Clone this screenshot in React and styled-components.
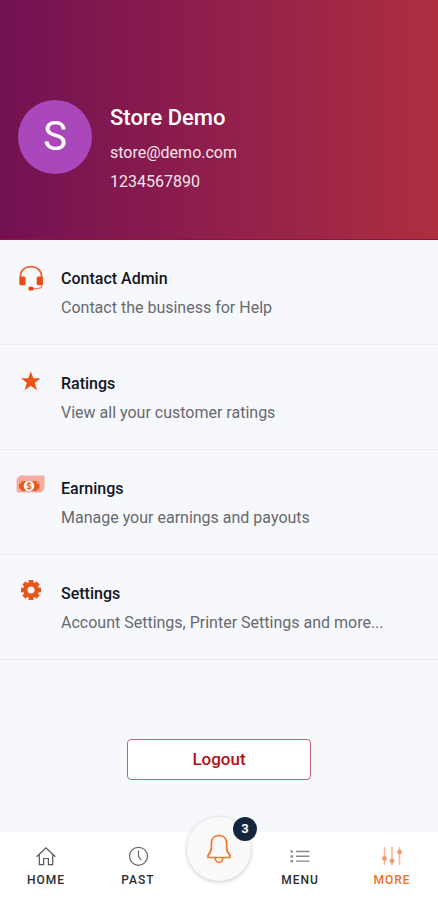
import React from 'react';
import styled, { createGlobalStyle } from 'styled-components';

const GlobalStyle = createGlobalStyle`
  * {
    box-sizing: border-box;
  }
  body {
    margin: 0;
    background: #f7f8fc;
    font-family: Roboto, 'Liberation Sans', sans-serif;
    color: #14151f;
  }
`;

const Page = styled.div`
  display: flex;
  flex-direction: column;
  min-height: 100vh;
`;

const ProfileHeader = styled.header`
  display: flex;
  align-items: flex-start;
  gap: 18px;
  padding: 100px 18px 43px;
  background: linear-gradient(90deg, #721152 0%, #911f4c 50%, #ad2f3f 100%);
  border-bottom: 1px solid #98103c;
`;

const Avatar = styled.div`
  display: flex;
  align-items: center;
  justify-content: center;
  flex-shrink: 0;
  width: 74px;
  height: 74px;
  border-radius: 50%;
  background: #a947bb;
  color: #fff;
  font-size: 40px;
  line-height: 40px;
`;

const ProfileName = styled.h1`
  margin: 0;
  padding: 4px 0 6px;
  font-size: 22px;
  line-height: 28px;
  font-weight: 500;
  color: #fff;
`;

const ProfileText = styled.p`
  margin: 0;
  font-size: 16px;
  line-height: 29px;
  color: #f3e4ea;
`;

const Main = styled.main`
  flex: 1;
`;

const OptionList = styled.ul`
  margin: 0;
  padding: 0;
  list-style: none;
`;

const OptionLink = styled.a`
  display: flex;
  gap: 16px;
  padding: 24px 16px 22px;
  border-bottom: 1px solid #eaebf0;
  color: inherit;
  text-decoration: none;
`;

const OptionIcon = styled.span`
  display: flex;
  flex-shrink: 0;
  width: 29px;
  height: 29px;
  svg {
    width: 29px;
    height: 29px;
  }
`;

const OptionTitle = styled.h2`
  margin: 0;
  font-size: 16px;
  line-height: 29px;
  font-weight: 500;
`;

const OptionText = styled.p`
  margin: 0;
  font-size: 16px;
  line-height: 29px;
  color: #666a70;
`;

const LogoutButton = styled.button`
  display: block;
  width: 42%;
  margin: 79px auto 50px;
  padding: 0;
  background: #fff;
  border: 1px solid #c4627a;
  border-radius: 4px;
  font-family: inherit;
  font-size: 17px;
  line-height: 39px;
  font-weight: 500;
  color: #b01218;
`;

const TabBar = styled.nav`
  position: sticky;
  bottom: 0;
  display: flex;
  height: 68px;
  background: #fff;
`;

const Tab = styled.a`
  display: flex;
  flex: 1;
  flex-direction: column;
  align-items: center;
  gap: 6px;
  padding-top: 14px;
  font-size: 12px;
  line-height: 16px;
  font-weight: 500;
  letter-spacing: 1px;
  text-decoration: none;
  color: ${({ $active }) => ($active ? '#f0701f' : '#2c2c30')};
  svg {
    width: 22px;
    height: 20px;
  }
`;

const AlertSlot = styled.div`
  position: relative;
  width: 70px;
`;

const AlertButton = styled.button`
  position: absolute;
  top: -15px;
  left: 3px;
  display: flex;
  align-items: center;
  justify-content: center;
  width: 64px;
  height: 64px;
  padding: 0;
  border: 0;
  border-radius: 50%;
  background: #fafafa;
  box-shadow: 0 1px 4px rgba(0, 0, 0, 0.22);
  svg {
    width: 26px;
    height: 30px;
  }
`;

const Badge = styled.span`
  position: absolute;
  top: 0;
  right: -6px;
  width: 24px;
  height: 24px;
  border-radius: 50%;
  background: #14263d;
  color: #fff;
  font-family: Roboto, 'Liberation Sans', sans-serif;
  font-size: 13px;
  line-height: 24px;
  font-weight: 700;
  text-align: center;
`;

const HeadsetIcon = () => (
  <svg viewBox="0 0 29 29" fill="none" aria-hidden="true">
    <path
      d="M4.400 14v-1.600C4.400 6.500 9 2.700 15 2.700s10.600 3.800 10.600 9.700V14"
      stroke="#ee5a2a"
      strokeWidth="1.700"
    />
    <path d="M25.800 19v2.600q0 2.600-3 2.800l-7 .4" stroke="#f08a6a" strokeWidth="1.300" />
    <rect x="3.300" y="12.500" width="6.200" height="8.800" rx="1.500" fill="#ee4b14" />
    <rect x="20.700" y="12.500" width="6.200" height="8.800" rx="1.500" fill="#ee4b14" />
    <rect x="12.300" y="22.800" width="5.400" height="3.800" rx="1.700" fill="#ee3f14" />
  </svg>
);

const StarIcon = () => (
  <svg viewBox="0 0 29 29" aria-hidden="true">
    <path
      d="M14.800 2.300l2.500 7h7.300l-5.800 4.500 2.200 7.400-6.200-4.400-6.200 4.400 2.200-7.400L5 9.300h7.300z"
      fill="#ea5418"
    />
  </svg>
);

const MoneyIcon = () => (
  <svg viewBox="0 0 29 29" aria-hidden="true">
    <path
      d="M4.500 1.500h23q1 0 1 1V14q0 .8-.6 1.400l-2.200 2.400q-.6.700-1.600.700H2q-1.400 0-1.400-1.400V5.700q0-.8.600-1.400l1.900-2.100Q3.700 1.500 4.500 1.500z"
      fill="#f4aca2"
    />
    <rect x="3" y="7.200" width="20.500" height="9.800" fill="#ea5a1c" />
    <path
      d="M3 9.700a2.500 2.500 0 0 0 2.500-2.500H3zM3 14.500A2.500 2.500 0 0 1 5.500 17H3zM23.500 9.700A2.500 2.500 0 0 1 21 7.200h2.500zM23.500 14.500A2.500 2.500 0 0 0 21 17h2.500z"
      fill="#f4aca2"
    />
    <circle cx="13" cy="12" r="5.300" fill="#fff" />
    <path
      d="M15 10.200q-.5-1.100-2-1.100t-1.900 1.200c-.2 2.400 4 1.200 3.900 3.300q-.2 1.300-2 1.300t-2.100-1.300M13 8.100v7.800"
      fill="none"
      stroke="#ea6a34"
      strokeWidth="1.200"
    />
  </svg>
);

const GearIcon = () => (
  <svg viewBox="0 0 29 29" aria-hidden="true">
    <g fill="#ea5418" transform="translate(15 11)">
      {[0, 45, 90, 135, 180, 225, 270, 315].map((angle) => (
        <path key={angle} d="M-2.300-6v-4h4.600v4z" transform={`rotate(${angle})`} />
      ))}
      <circle r="7.900" />
      <circle r="3.500" fill="#f7f8fc" />
    </g>
  </svg>
);

const HomeIcon = () => (
  <svg viewBox="0 0 22 20" fill="none" stroke="#55555a" strokeWidth="1.200" aria-hidden="true">
    <path d="M1.700 10.700L11 1.800l9.300 8.900" />
    <path d="M4.300 9v9.700h4.300v-6.200h4.800v6.200h4.300V9" />
  </svg>
);

const ClockIcon = () => (
  <svg viewBox="0 0 22 20" fill="none" stroke="#66666a" strokeWidth="1.200" aria-hidden="true">
    <circle cx="11.500" cy="10.300" r="9" />
    <path d="M11.500 4.500v6l2.800 3.500" />
  </svg>
);

const MenuIcon = () => (
  <svg viewBox="0 0 22 20" stroke="#88888c" strokeWidth="1.400" aria-hidden="true">
    <path d="M1.500 5.500h2.500M1.500 10.300h2.500M1.500 15.100h2.500" strokeWidth="2.200" />
    <path d="M7 5.500h13.500M7 10.300h13.500M7 15.100h13.500" />
  </svg>
);

const SlidersIcon = () => (
  <svg viewBox="0 0 22 20" stroke="#f9b79c" strokeWidth="1.600" fill="#f49a72" aria-hidden="true">
    <path d="M3.500 1v18M11 1v18M18.500 1v18" />
    <g stroke="none">
      <circle cx="3.500" cy="12.500" r="2.400" />
      <circle cx="11" cy="15" r="2.400" />
      <circle cx="18.500" cy="6" r="2.400" />
    </g>
  </svg>
);

const BellIcon = () => (
  <svg viewBox="0 0 26 30" fill="none" stroke="#f0742c" strokeWidth="1.700" strokeLinejoin="round" aria-hidden="true">
    <path d="M13 1.500c-4.600 0-7.600 3.100-7.600 7.700v4.300c0 4-1.200 5.700-3.400 7.800v2.200h22v-2.200c-2.200-2.100-3.400-3.800-3.400-7.800V9.200c0-4.600-3-7.700-7.600-7.700z" />
    <path d="M9.200 23.500a3.800 5 0 0 0 7.600 0" />
  </svg>
);

const options = [
  { title: 'Contact Admin', text: 'Contact the business for Help', icon: <HeadsetIcon /> },
  { title: 'Ratings', text: 'View all your customer ratings', icon: <StarIcon /> },
  { title: 'Earnings', text: 'Manage your earnings and payouts', icon: <MoneyIcon /> },
  {
    title: 'Settings',
    text: 'Account Settings, Printer Settings and more...',
    icon: <GearIcon />,
  },
];

function App() {
  return (
    <Page>
      <GlobalStyle />

      <ProfileHeader>
        <Avatar>S</Avatar>
        <div>
          <ProfileName>Store Demo</ProfileName>
          <ProfileText>store@demo.com</ProfileText>
          <ProfileText>1234567890</ProfileText>
        </div>
      </ProfileHeader>

      <Main>
        <OptionList>
          {options.map(({ title, text, icon }) => (
            <li key={title}>
              <OptionLink href="#">
                <OptionIcon>{icon}</OptionIcon>
                <div>
                  <OptionTitle>{title}</OptionTitle>
                  <OptionText>{text}</OptionText>
                </div>
              </OptionLink>
            </li>
          ))}
        </OptionList>
        <LogoutButton type="button">Logout</LogoutButton>
      </Main>

      <TabBar>
        <Tab href="#">
          <HomeIcon />
          HOME
        </Tab>
        <Tab href="#">
          <ClockIcon />
          PAST
        </Tab>
        <AlertSlot>
          <AlertButton type="button" aria-label="Notifications">
            <BellIcon />
            <Badge>3</Badge>
          </AlertButton>
        </AlertSlot>
        <Tab href="#">
          <MenuIcon />
          MENU
        </Tab>
        <Tab href="#" $active>
          <SlidersIcon />
          MORE
        </Tab>
      </TabBar>
    </Page>
  );
}

export default App;
